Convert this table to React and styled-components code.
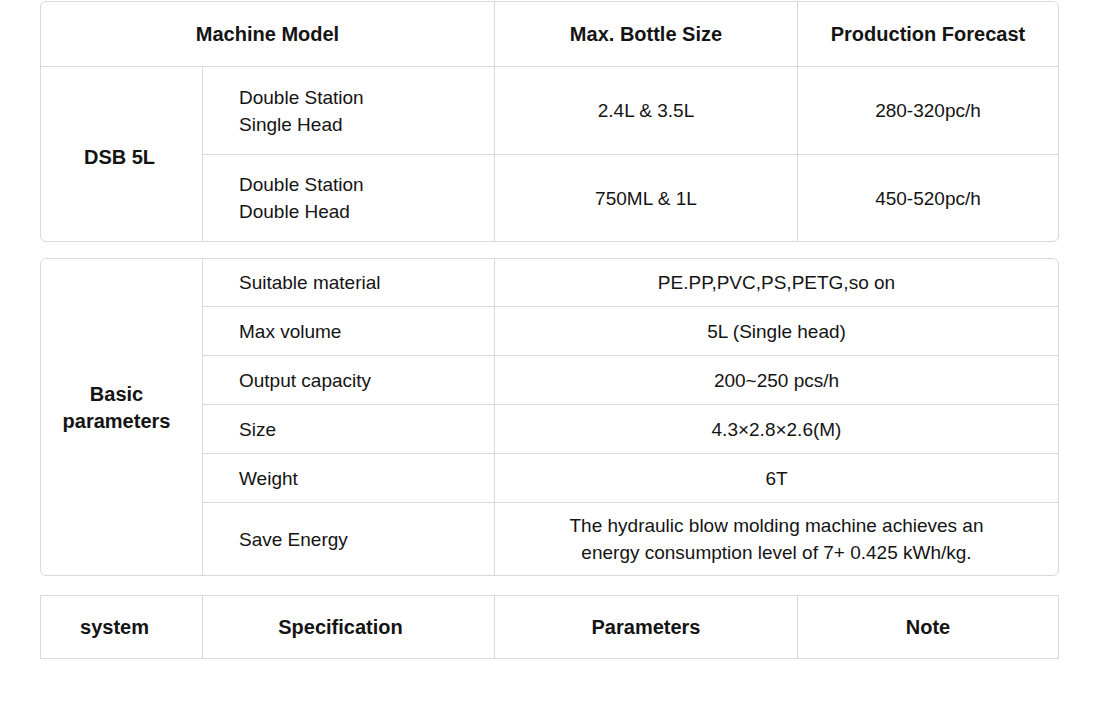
import { Fragment } from "react";
import styled, { createGlobalStyle } from "styled-components";

const GlobalStyle = createGlobalStyle`
  body {
    margin: 0;
    background: #ffffff;
    font-family: "Liberation Sans", Arial, sans-serif;
    color: #141414;
  }
`;

const Page = styled.div`
  width: 1100px;
  padding: 1px 41px 0 40px;
  box-sizing: border-box;
  display: flex;
  flex-direction: column;
`;

const Table = styled.div`
  display: grid;
  grid-template-columns: ${(p) => p.cols};
  grid-template-rows: ${(p) => p.rows};
  border: 1px solid #d9d9d9;
  border-radius: ${(p) => (p.square ? "0" : "6px")};
  overflow: hidden;
  margin-bottom: ${(p) => p.gap || "0"};
  box-sizing: border-box;
`;

const Cell = styled.div`
  display: flex;
  align-items: center;
  justify-content: ${(p) => (p.left ? "flex-start" : "center")};
  text-align: ${(p) => (p.left ? "left" : "center")};
  padding: ${(p) => (p.left ? "0 0 0 36px" : p.pad || "0 12px")};
  grid-column: ${(p) => p.col || "auto"};
  grid-row: ${(p) => p.row || "auto"};
  border-right: ${(p) => (p.last ? "none" : "1px solid #d9d9d9")};
  border-bottom: ${(p) => (p.bottom ? "none" : "1px solid #d9d9d9")};
  font-size: ${(p) => (p.head ? "20px" : "19px")};
  font-weight: ${(p) => (p.head ? 700 : 400)};
  line-height: 27px;
  box-sizing: border-box;
`;

const cols4 = "162px 292px 303px 1fr";

export default function App() {
  const params = [
    ["Suitable material", "PE.PP,PVC,PS,PETG,so on"],
    ["Max volume", "5L (Single head)"],
    ["Output capacity", "200~250 pcs/h"],
    ["Size", "4.3×2.8×2.6(M)"],
    ["Weight", "6T"],
  ];

  return (
    <>
      <GlobalStyle />
      <Page>
        <Table cols={cols4} rows="65px 88px 86px" gap="16px">
          <Cell head col="1 / 3">Machine Model</Cell>
          <Cell head>Max. Bottle Size</Cell>
          <Cell head last>Production Forecast</Cell>

          <Cell head row="2 / 4" bottom pad="6px 14px 0 10px">DSB 5L</Cell>
          <Cell left>Double Station<br />Single Head</Cell>
          <Cell>2.4L &amp; 3.5L</Cell>
          <Cell last>280-320pc/h</Cell>

          <Cell left bottom>Double Station<br />Double Head</Cell>
          <Cell bottom>750ML &amp; 1L</Cell>
          <Cell last bottom>450-520pc/h</Cell>
        </Table>

        <Table cols="162px 292px 1fr" rows="48px 49px 49px 49px 49px 72px" gap="19px">
          <Cell head row="1 / 7" bottom pad="0 18px 18px 8px">Basic<br />parameters</Cell>
          {params.map(([label, value]) => (
            <Fragment key={label}>
              <Cell left>{label}</Cell>
              <Cell last>{value}</Cell>
            </Fragment>
          ))}
          <Cell left bottom>Save Energy</Cell>
          <Cell last bottom>
            The hydraulic blow molding machine achieves an<br />
            energy consumption level of 7+ 0.425 kWh/kg.
          </Cell>
        </Table>

        <Table cols={cols4} rows="62px" square>
          <Cell head bottom pad="0 22px 0 8px">system</Cell>
          <Cell head bottom pad="0 28px 0 12px">Specification</Cell>
          <Cell head bottom>Parameters</Cell>
          <Cell head bottom last>Note</Cell>
        </Table>
      </Page>
    </>
  );
}
